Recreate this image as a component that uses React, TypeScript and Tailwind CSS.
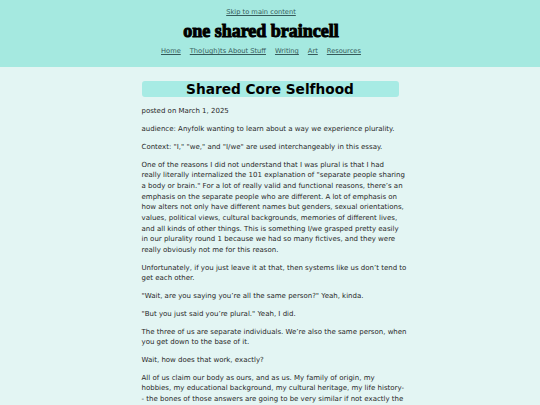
import React from 'react';

// Essay page: teal banner header, centred reading column.

const NAV = ['Home', 'Tho(ugh)ts About Stuff', 'Writing', 'Art', 'Resources'];

const PARAS: string[][] = [
  ['posted on March 1, 2025'],
  ['audience: Anyfolk wanting to learn about a way we experience plurality.'],
  ['Context: "I," "we," and "I/we" are used interchangeably in this essay.'],
  [
    'One of the reasons I did not understand that I was plural is that I had',
    'really literally internalized the 101 explanation of "separate people sharing',
    'a body or brain." For a lot of really valid and functional reasons, there’s an',
    'emphasis on the separate people who are different. A lot of emphasis on',
    'how alters not only have different names but genders, sexual orientations,',
    'values, political views, cultural backgrounds, memories of different lives,',
    'and all kinds of other things. This is something I/we grasped pretty easily',
    'in our plurality round 1 because we had so many fictives, and they were',
    'really obviously not me for this reason.',
  ],
  [
    'Unfortunately, if you just leave it at that, then systems like us don’t tend to',
    'get each other.',
  ],
  ['"Wait, are you saying you’re all the same person?" Yeah, kinda.'],
  ['"But you just said you’re plural." Yeah, I did.'],
  [
    'The three of us are separate individuals. We’re also the same person, when',
    'you get down to the base of it.',
  ],
  ['Wait, how does that work, exactly?'],
  [
    'All of us claim our body as ours, and as us. My family of origin, my',
    'hobbies, my educational background, my cultural heritage, my life history-',
    '- the bones of those answers are going to be very similar if not exactly the',
    'same for each of us.',
  ],
];

export default function App() {
  return (
    <div
      className="min-h-[405px] bg-[#e3f5f3] text-[#282828]"
      style={{ fontFamily: '"DejaVu Sans", sans-serif' }}
    >
      <header className="bg-[#a5e9e0] pt-[7px] pb-[10px] pr-[18px] flex flex-col items-center">
        <a href="#main" className="text-[6.7px] leading-[11px] text-[#365a5a] underline">
          Skip to main content
        </a>
        <h1
          className="mt-[3px] text-[18px] leading-[20px] font-bold text-black [-webkit-text-stroke:1px_black]"
          style={{ fontFamily: '"Liberation Serif", serif' }}
        >
          one shared braincell
        </h1>
        <nav className="mt-[5px] flex gap-[9px] text-[6.7px] leading-[11px]">
          {NAV.map((n) => (
            <a key={n} href="#" className="text-[#365a5a] underline">
              {n}
            </a>
          ))}
        </nav>
      </header>

      <main id="main" className="mx-auto w-[257px] pt-[14px]">
        <h2 className="h-[16px] rounded-[3px] bg-[#a7ebe4] text-center text-[13.7px] leading-[16px] font-bold text-black">
          Shared Core Selfhood
        </h2>
        <div className="pt-[2.4px] text-[7px] leading-[10.65px]">
          {PARAS.map((lines, i) => (
            <p key={i} className="mt-[7.1px] whitespace-nowrap">
              {lines.map((l, j) => (
                <span key={j} className="block">
                  {l}
                </span>
              ))}
            </p>
          ))}
        </div>
      </main>
    </div>
  );
}
